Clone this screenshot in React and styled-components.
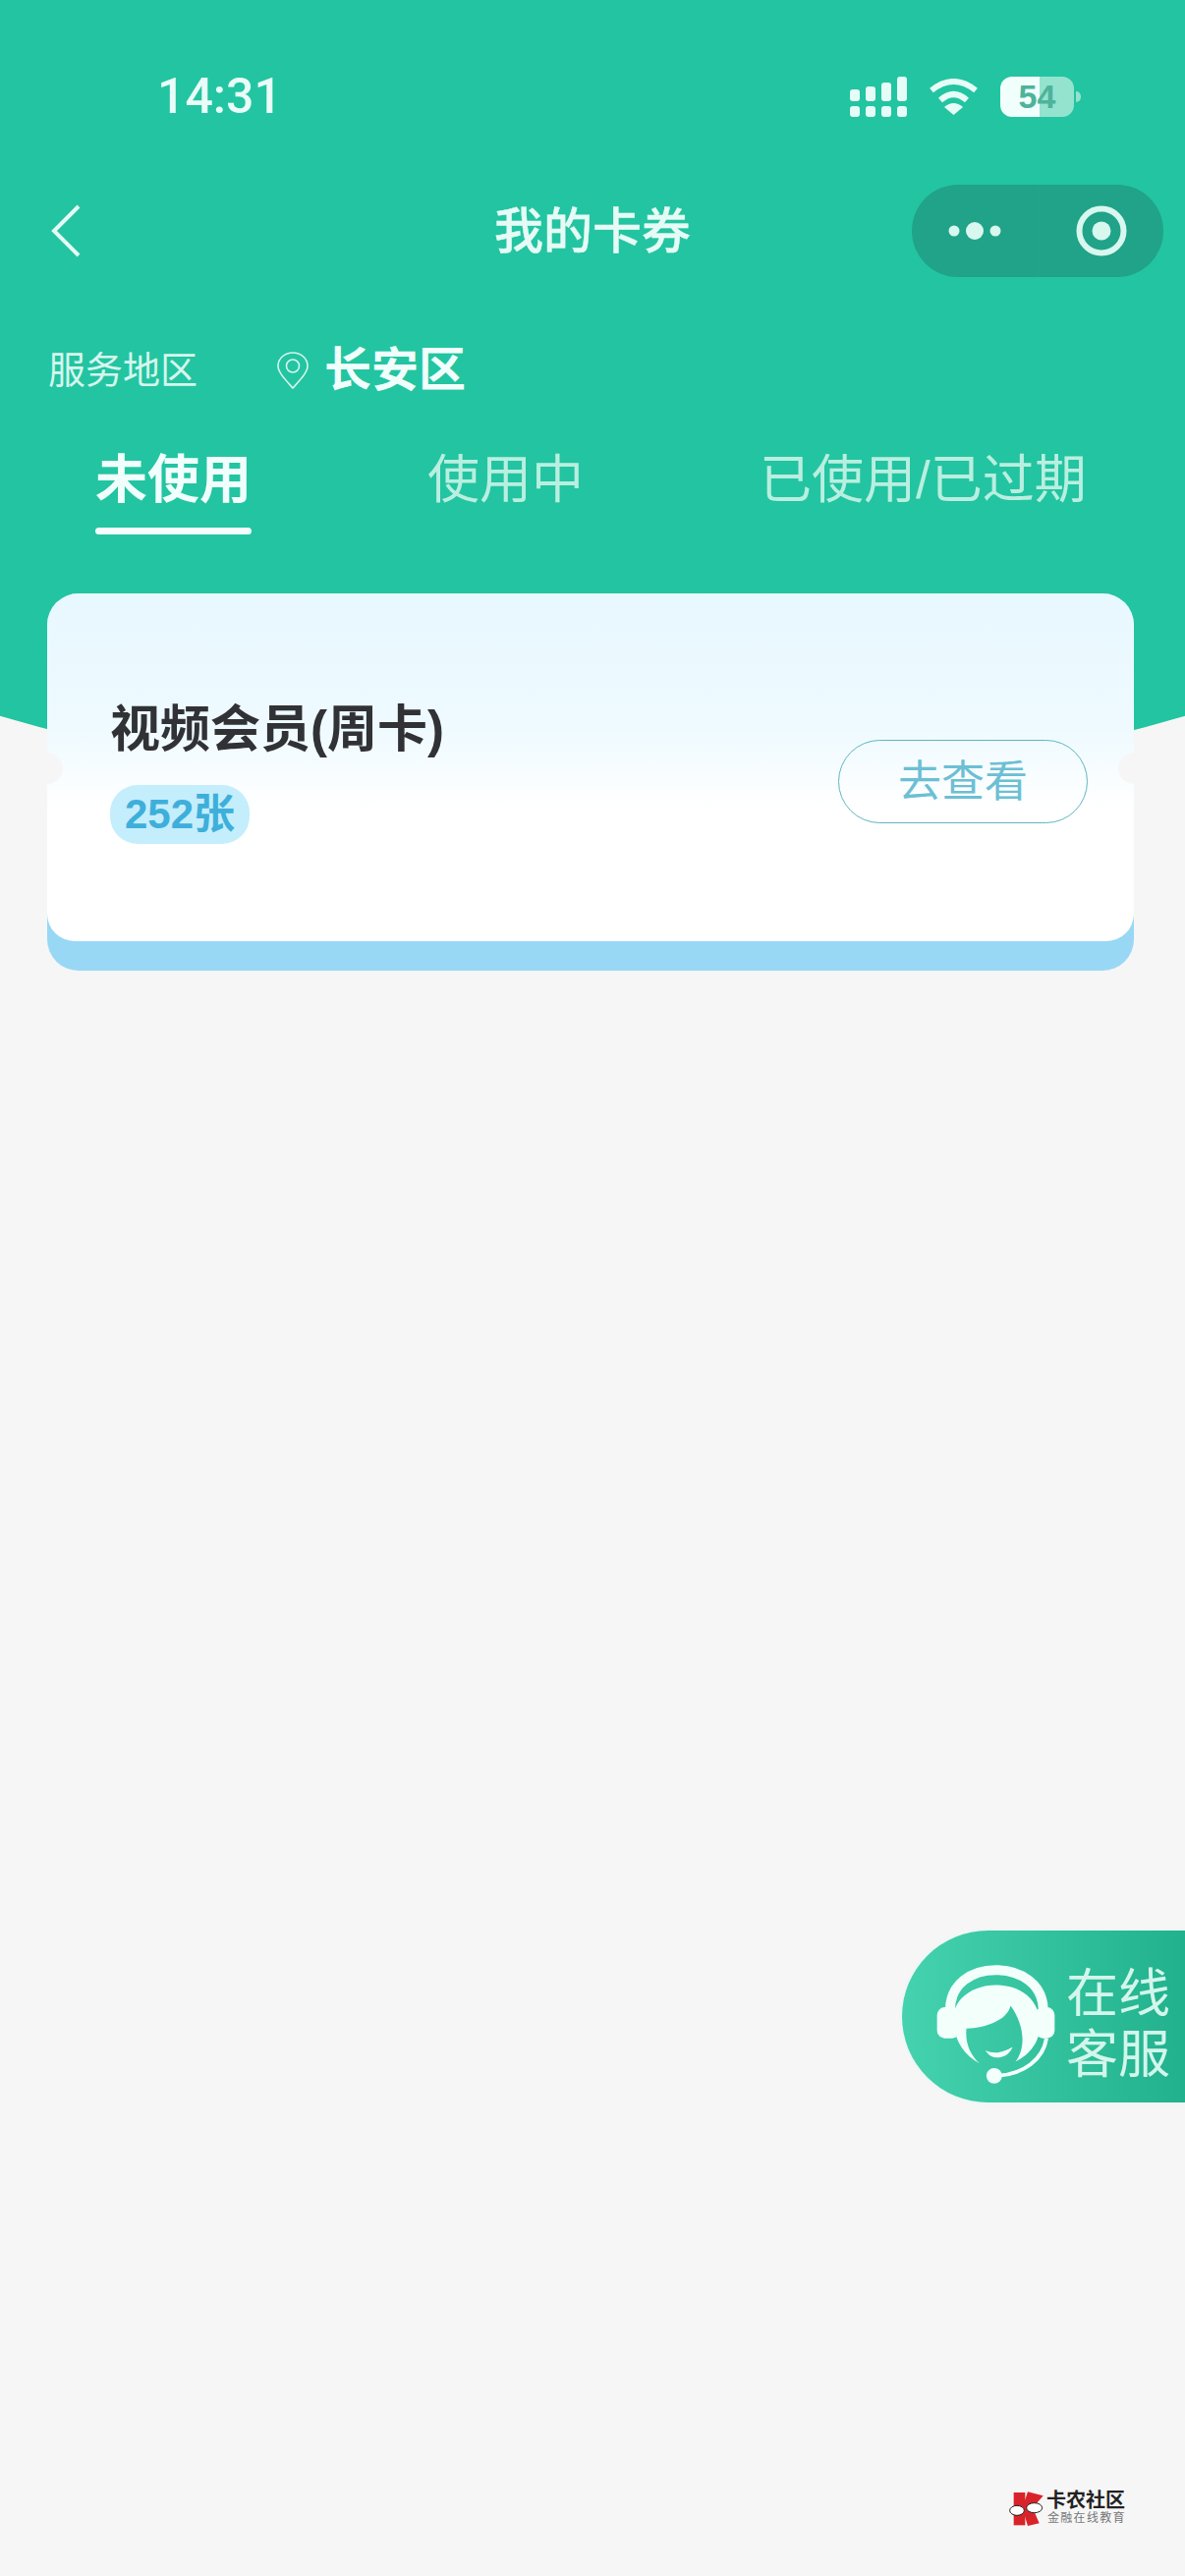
import React from "react";
import styled, { createGlobalStyle } from "styled-components";

const GlobalStyle = createGlobalStyle`
  html, body { margin: 0; padding: 0; background: #f6f6f6; }
  * { box-sizing: border-box; }
  body { font-family: "Liberation Sans", "Noto Sans CJK SC", sans-serif; }
`;

const Page = styled.div`
  position: relative;
  width: 1206px;
  height: 2622px;
  overflow: hidden;
  background: #f6f6f6;

  /* 상단 초록 배경, 아래가 큰 원호 */
  &::before {
    content: "";
    position: absolute;
    left: 0;
    top: 0;
    width: 100%;
    height: 830px;
    background: #23c4a1;
    clip-path: circle(2150px at 603px -1335px);
  }
`;

const Content = styled.div`
  position: relative;
`;

const StatusBar = styled.div`
  height: 188px;
  padding: 8px 113px 0 160px;
  display: flex;
  align-items: center;
  justify-content: space-between;
`;

const Time = styled.div`
  font-family: Roboto, "Liberation Sans", sans-serif;
  font-weight: 500;
  font-size: 50px;
  line-height: 60px;
  color: #e9fcf7;
`;

const StatusIcons = styled.div`
  display: flex;
  align-items: center;
  gap: 22px;
`;

const Battery = styled.div`
  position: relative;
  width: 75px;
  height: 41px;
  border-radius: 12px;
  background: linear-gradient(90deg, #f0fffb 53%, #93e3cf 53%);
  color: #4fb39b;
  font-weight: 700;
  font-size: 34px;
  line-height: 41px;
  text-align: center;

  &::after {
    content: "";
    position: absolute;
    right: -7px;
    top: 15px;
    width: 5px;
    height: 11px;
    border-radius: 0 5px 5px 0;
    background: #93e3cf;
  }
`;

const NavBar = styled.div`
  height: 94px;
  padding: 0 22px;
  display: grid;
  grid-template-columns: 1fr auto 1fr;
  align-items: center;
`;

const BackIcon = styled.svg`
  margin-left: 30px;
  display: block;
`;

const Title = styled.div`
  padding-top: 2px;
  font-size: 50px;
  line-height: 60px;
  font-weight: 500;
  color: #e6fbf5;
  -webkit-text-stroke: 0.4px #e6fbf5;
`;

const Capsule = styled.div`
  justify-self: end;
  width: 256px;
  height: 94px;
  border-radius: 47px;
  background: #20a388;
  display: grid;
  grid-template-columns: 128px 128px;
`;

const CapsuleCell = styled.div`
  display: flex;
  align-items: center;
  justify-content: ${(props) => (props.$right ? "flex-start" : "center")};
  padding-left: ${(props) => (props.$right ? "38px" : "0")};
  border-left: ${(props) => (props.$right ? "1px solid #22a88c" : "none")};
`;

const ServiceRow = styled.div`
  margin-top: 70px;
  height: 50px;
  padding-left: 49px;
  display: flex;
  align-items: center;
`;

const ServiceLabel = styled.div`
  width: 232px;
  font-size: 38px;
  line-height: 50px;
  color: #d6f6ed;
`;

const PinIcon = styled.svg`
  display: block;
  margin-right: 15px;
`;

const District = styled.div`
  font-size: 48px;
  line-height: 50px;
  font-weight: 700;
  color: #f0fffb;
`;

const Tabs = styled.div`
  margin-top: 57px;
  padding-left: 97px;
  display: flex;
  gap: 179px;
`;

const Tab = styled.div`
  display: flex;
  flex-direction: column;
  font-size: 53px;
  line-height: 60px;
  font-weight: ${(props) => (props.$active ? 700 : 400)};
  color: ${(props) => (props.$active ? "#f0fffb" : "#b9efe0")};

  &::after {
    content: "";
    margin-top: 18px;
    height: 7px;
    border-radius: 4px;
    background: ${(props) => (props.$active ? "#f4fffc" : "transparent")};
  }
`;

const CardBase = styled.div`
  margin: 60px 0 0 48px;
  width: 1106px;
  height: 384px;
  border-radius: 32px;
  background: #99d8f5;
`;

const Card = styled.div`
  position: relative;
  height: 354px;
  padding: 109px 47px 0 64px;
  display: flex;
  justify-content: space-between;
  align-items: flex-start;
  border-radius: 32px 32px 28px 28px;
  background: linear-gradient(180deg, #e8f8ff 0%, #eefaff 38%, #ffffff 62%);

  &::before,
  &::after {
    content: "";
    position: absolute;
    top: 162px;
    width: 32px;
    height: 32px;
    border-radius: 50%;
    background: #f6f6f6;
  }
  &::before { left: -16px; }
  &::after { right: -16px; }
`;

const CardName = styled.div`
  font-size: 51px;
  line-height: 60px;
  font-weight: 700;
  color: #303236;
`;

const CountBadge = styled.div`
  margin-top: 26px;
  width: 142px;
  height: 60px;
  border-radius: 28px;
  background: #c4eefb;
  color: #3eafdb;
  font-size: 42px;
  line-height: 60px;
  font-weight: 700;
  text-align: center;
`;

const ViewButton = styled.div`
  margin-top: 40px;
  width: 254px;
  height: 85px;
  border-radius: 43px;
  border: 1.5px solid #5fb6c2;
  color: #6cbfd4;
  font-size: 44px;
  line-height: 84px;
  text-align: center;
`;

const ServiceFloat = styled.div`
  position: absolute;
  right: 0;
  top: 1965px;
  width: 288px;
  height: 175px;
  padding: 16px 0 0 34px;
  border-radius: 88px 0 0 88px;
  display: flex;
  align-items: center;
  gap: 10px;
  background: linear-gradient(90deg, #44d3ae 0%, #21b18c 100%);
  box-shadow: 0 0 4px #dff7f0;
`;

const FloatText = styled.div`
  font-size: 53px;
  line-height: 62px;
  color: #d3f6ec;
`;

const Watermark = styled.div`
  position: absolute;
  left: 1027px;
  top: 2535px;
  display: flex;
  gap: 3px;
`;

const WatermarkText = styled.div`
  display: flex;
  flex-direction: column;
`;

const WatermarkName = styled.div`
  font-size: 20px;
  line-height: 20px;
  font-weight: 700;
  color: #222;
`;

const WatermarkSub = styled.div`
  margin: 1px 0 0 1px;
  font-size: 12px;
  line-height: 14px;
  letter-spacing: 1.3px;
  color: #777;
`;

const SignalIcon = () => (
  <svg width="58" height="41" viewBox="0 0 58 41" fill="#e6fcf7">
    {[0, 16, 32, 48].map((x, i) => (
      <g key={i}>
        <rect x={x} y={[13, 10, 6, 0][i]} width="10" height={25 - [13, 10, 6, 0][i]} rx="3" />
        <rect x={x} y="30" width="10" height="11" rx="3" />
      </g>
    ))}
  </svg>
);

const WifiIcon = () => (
  <svg width="51" height="37" viewBox="0 0 51 37" fill="none" stroke="#e6fcf7" strokeWidth="6">
    <path d="M3 12Q25.5-6 48 12" />
    <path d="M12 22Q25.5 10 39 22" />
    <path d="M25.5 37L16 29Q25.5 21 35 29Z" fill="#e6fcf7" stroke="none" />
  </svg>
);

const HeadsetIcon = () => (
  <svg width="123" height="125" viewBox="150 145 370 375" fill="#f2fffb">
    <path d="M195 300C190 205 265 166 335 166C405 166 485 205 480 300" fill="none" stroke="#f2fffb" strokeWidth="30" />
    <path d="M205 335C195 255 265 212 335 212C410 212 470 255 470 335C470 385 440 425 395 447C430 400 420 330 380 275C370 320 300 345 245 345C240 385 255 425 285 452C240 430 212 385 205 335Z" />
    <rect x="155" y="280" width="70" height="95" rx="24" />
    <rect x="455" y="280" width="60" height="95" rx="24" />
    <path d="M490 375C480 440 420 485 340 490" fill="none" stroke="#f2fffb" strokeWidth="12" />
    <circle cx="330" cy="490" r="24" />
    <path d="M303 412C330 425 360 418 386 402C375 436 325 449 303 412Z" />
  </svg>
);

const KanongLogo = () => (
  <svg width="35" height="36" viewBox="78 72 105 108">
    <path d="M92 78H127V178H92Z" fill="#d9232a" />
    <path d="M135 76L182 88L150 125L170 172L135 180L118 125Z" fill="#d9232a" />
    <ellipse cx="102" cy="133" rx="22" ry="15" fill="#fff" stroke="#222" strokeWidth="3" />
    <ellipse cx="155" cy="125" rx="24" ry="15" fill="#fff" stroke="#222" strokeWidth="3" />
  </svg>
);

const App = () => {
  return (
    <Page>
      <GlobalStyle />
      <Content>
        <StatusBar>
          <Time>14:31</Time>
          <StatusIcons>
            <SignalIcon />
            <WifiIcon />
            <Battery>54</Battery>
          </StatusIcons>
        </StatusBar>

        <NavBar>
          <BackIcon width="31" height="54" viewBox="0 0 31 54" fill="none" stroke="#e6fbf5" strokeWidth="4">
            <path d="M28 2L3 27L28 52" />
          </BackIcon>
          <Title>我的卡券</Title>
          <Capsule>
            <CapsuleCell>
              <svg width="66" height="24" viewBox="0 0 66 24" fill="#d8f7ee">
                <circle cx="12" cy="12" r="5.5" />
                <circle cx="33" cy="12" r="9" />
                <circle cx="54" cy="12" r="5.5" />
              </svg>
            </CapsuleCell>
            <CapsuleCell $right>
              <svg width="52" height="52" viewBox="0 0 52 52" fill="none">
                <circle cx="26" cy="26" r="22.5" stroke="#d8f7ee" strokeWidth="6" />
                <circle cx="26" cy="26" r="9.5" fill="#d8f7ee" />
              </svg>
            </CapsuleCell>
          </Capsule>
        </NavBar>

        <ServiceRow>
          <ServiceLabel>服务地区</ServiceLabel>
          <PinIcon width="34" height="38" viewBox="0 0 34 38" fill="none" stroke="#d6f6ed" strokeWidth="1.6">
            <path d="M17 37C9 28 2 21 2 14.5C2 6.5 9 1 17 1C25 1 32 6.5 32 14.5C32 21 25 28 17 37Z" />
            <circle cx="17" cy="14.5" r="6.5" />
          </PinIcon>
          <District>长安区</District>
        </ServiceRow>

        <Tabs>
          <Tab $active>未使用</Tab>
          <Tab>使用中</Tab>
          <Tab>已使用/已过期</Tab>
        </Tabs>

        <CardBase>
          <Card>
            <div>
              <CardName>视频会员(周卡)</CardName>
              <CountBadge>252张</CountBadge>
            </div>
            <ViewButton>去查看</ViewButton>
          </Card>
        </CardBase>
      </Content>

      <ServiceFloat>
        <HeadsetIcon />
        <FloatText>
          在线
          <br />
          客服
        </FloatText>
      </ServiceFloat>

      <Watermark>
        <KanongLogo />
        <WatermarkText>
          <WatermarkName>卡农社区</WatermarkName>
          <WatermarkSub>金融在线教育</WatermarkSub>
        </WatermarkText>
      </Watermark>
    </Page>
  );
};

export default App;
